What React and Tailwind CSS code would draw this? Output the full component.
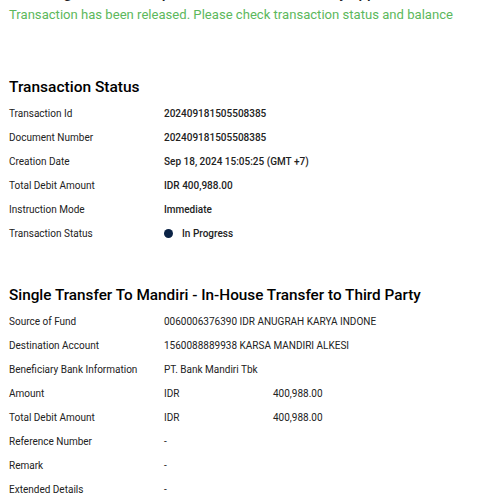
const statusRows = [
  { label: "Transaction Id", value: "202409181505508385" },
  { label: "Document Number", value: "202409181505508385" },
  { label: "Creation Date", value: "Sep 18, 2024 15:05:25 (GMT +7)" },
  { label: "Total Debit Amount", value: "IDR 400,988.00" },
  { label: "Instruction Mode", value: "Immediate" },
];

const transferRows = [
  { label: "Source of Fund", value: "0060006376390 IDR ANUGRAH KARYA INDONE" },
  { label: "Destination Account", value: "1560088889938 KARSA MANDIRI ALKESI" },
  { label: "Beneficiary Bank Information", value: "PT. Bank Mandiri Tbk" },
  { label: "Amount", value: "IDR", amount: "400,988.00" },
  { label: "Total Debit Amount", value: "IDR", amount: "400,988.00" },
  { label: "Reference Number", value: "-" },
  { label: "Remark", value: "-" },
  { label: "Extended Details", value: "-" },
];

const Row = ({ label, children }) => (
  <div className="flex h-[24px] items-center whitespace-nowrap text-[10px] text-[#222]">
    <div className="w-[155px] shrink-0">{label}</div>
    {children}
  </div>
);

export default function App() {
  return (
    <div
      className="h-[500px] w-[500px] overflow-hidden bg-white px-[9px]"
      style={{ fontFamily: "Roboto, 'Noto Sans', sans-serif" }}
    >
      <p className="-mt-[16px] whitespace-nowrap text-[15px] leading-[18px] font-medium text-[#222]">
        Your single transfer request has been successfully approved
      </p>
      <p className="mt-[5px] whitespace-nowrap text-[13.1px] leading-[16px] text-[#5cb85c]">
        Transaction has been released. Please check transaction status and balance
      </p>

      <h2 className="mt-[54px] text-[15.5px] leading-[20px] font-medium text-black">
        Transaction Status
      </h2>
      <div className="mt-[4px]">
        {statusRows.map((row) => (
          <Row key={row.label} label={row.label}>
            <span className="font-medium">{row.value}</span>
          </Row>
        ))}
        <Row label="Transaction Status">
          <span className="flex items-center gap-[9px] font-medium">
            <span className="h-[9px] w-[9px] rounded-full bg-[#0b2346]" />
            In Progress
          </span>
        </Row>
      </div>

      <h2 className="mt-[40px] whitespace-nowrap text-[15.3px] leading-[20px] font-medium text-black">
        Single Transfer To Mandiri - In-House Transfer to Third Party
      </h2>
      <div className="mt-[4px]">
        {transferRows.map((row, i) => (
          <Row key={i} label={row.label}>
            <span className="w-[109px] shrink-0">{row.value}</span>
            {row.amount ? <span>{row.amount}</span> : null}
          </Row>
        ))}
      </div>
    </div>
  );
}
